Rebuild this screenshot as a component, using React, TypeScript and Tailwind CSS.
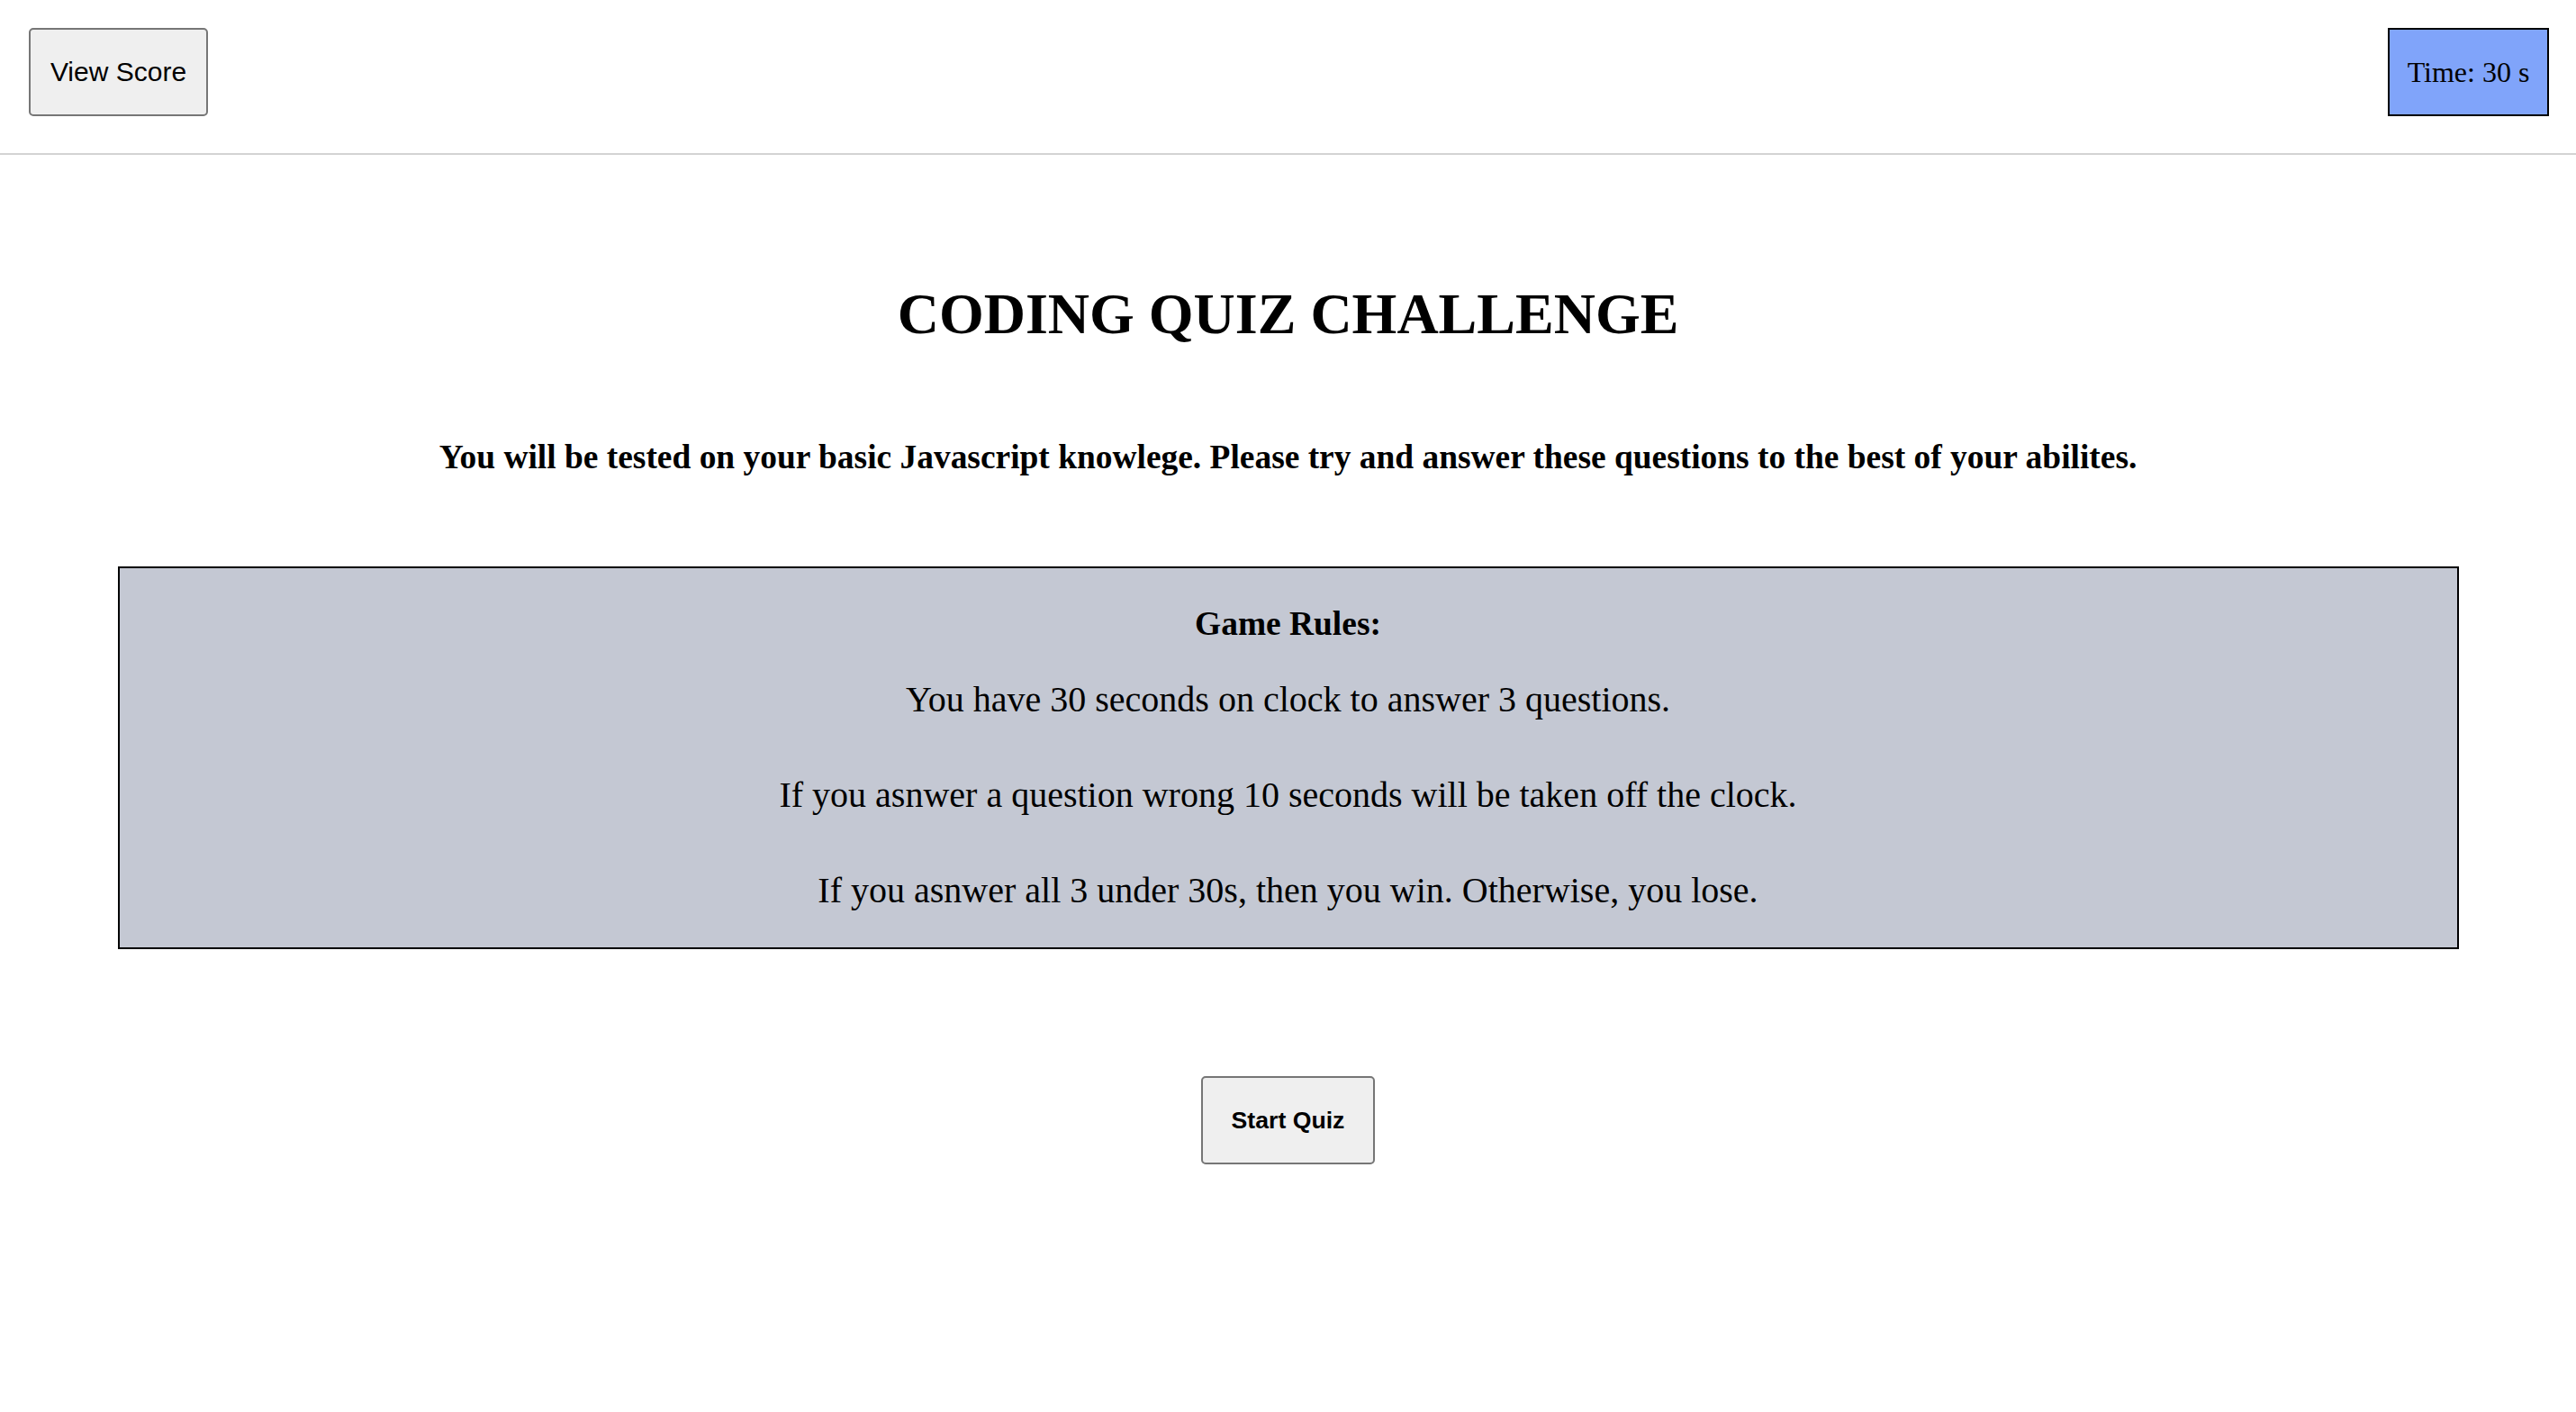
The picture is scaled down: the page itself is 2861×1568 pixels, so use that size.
import React from "react";

const rules = [
  "You have 30 seconds on clock to answer 3 questions.",
  "If you asnwer a question wrong 10 seconds will be taken off the clock.",
  "If you asnwer all 3 under 30s, then you win. Otherwise, you lose.",
];

const App = () => {
  return (
    <div className="min-h-screen bg-white text-black font-['Liberation_Serif',serif]">
      {/* header */}
      <header className="flex h-[172px] items-start justify-between border-b-2 border-[#d3d3d3] pl-[32px] pr-[30px] pt-[31px]">
        <button
          type="button"
          className="h-[98px] w-[199px] rounded-[5px] border-2 border-[#767676] bg-[#efefef] font-['Liberation_Sans',sans-serif] text-[30px] leading-none"
        >
          View Score
        </button>
        <div className="flex h-[98px] w-[179px] items-center justify-center border-2 border-black bg-[#80a4fa] text-[32px] leading-none">
          Time: 30 s
        </div>
      </header>

      <main className="flex flex-col items-center">
        <h1 className="mt-[140px] text-[64px] font-bold leading-[73px]">CODING QUIZ CHALLENGE</h1>
        <h3 className="mt-[101px] text-[37.44px] font-bold leading-[43px]">
          You will be tested on your basic Javascript knowlege. Please try and answer these questions to the best of your abilites.
        </h3>

        <section className="mt-[100px] flex w-[2600px] flex-col items-center border-2 border-black bg-[#c4c8d3] text-center">
          <h3 className="mt-[40px] text-[37.44px] font-bold leading-[43px]">Game Rules:</h3>
          <div className="mt-[40px] mb-[40px] flex flex-col gap-[60px] text-[40px] leading-[46px]">
            {rules.map((r, i) => (
              <p key={i}>{r}</p>
            ))}
          </div>
        </section>

        <button
          type="button"
          className="mt-[141px] h-[98px] w-[193px] rounded-[5px] border-2 border-[#767676] bg-[#efefef] font-['Liberation_Sans',sans-serif] text-[26.67px] font-bold leading-none"
        >
          Start Quiz
        </button>
      </main>
    </div>
  );
};

export default App;
